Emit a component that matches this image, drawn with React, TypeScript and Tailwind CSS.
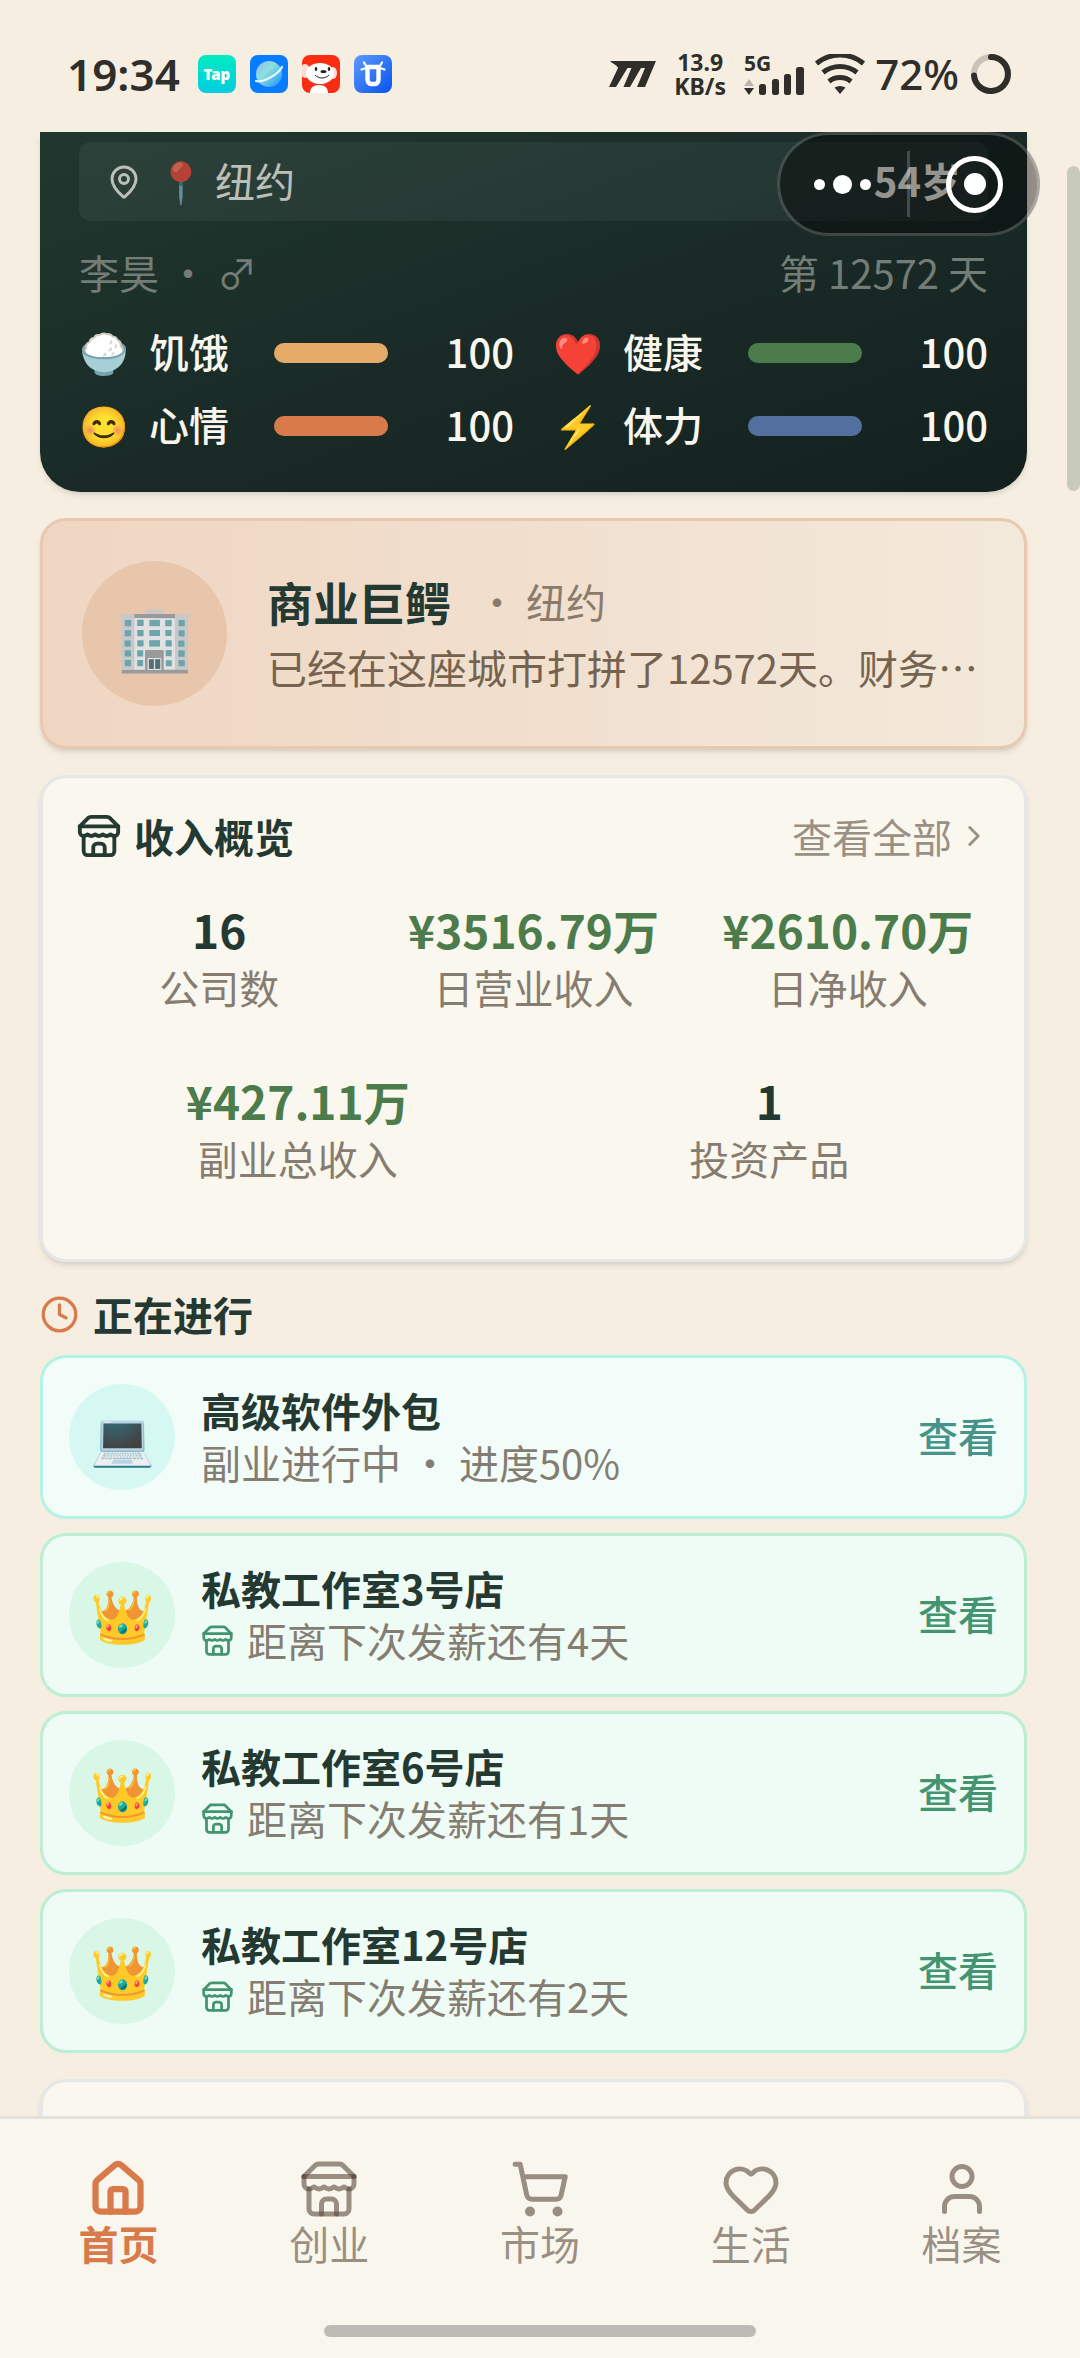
import type { ReactNode } from "react";
import {
  ChevronRight,
  Clock,
  Heart,
  House,
  MapPin,
  ShoppingCart,
  User,
} from "lucide-react";

const STATS = [
  { icon: "🍚", label: "饥饿", value: 100, color: "bg-[#e5ab69]" },
  { icon: "❤️", label: "健康", value: 100, color: "bg-[#4c7c4c]" },
  { icon: "😊", label: "心情", value: 100, color: "bg-[#d97a4a]" },
  { icon: "⚡", label: "体力", value: 100, color: "bg-[#536f9f]" },
];

const SHOPS = [
  { name: "私教工作室3号店", days: 4 },
  { name: "私教工作室6号店", days: 1 },
  { name: "私教工作室12号店", days: 2 },
];

function StoreIcon({ className }: { className?: string }) {
  return (
    <svg
      viewBox="0 0 24 24"
      fill="none"
      stroke="currentColor"
      strokeWidth="2"
      strokeLinecap="round"
      strokeLinejoin="round"
      className={className}
      aria-hidden="true"
    >
      <path d="m2 7 4.41-4.41A2 2 0 0 1 7.83 2h8.34a2 2 0 0 1 1.42.59L22 7" />
      <path d="M4 12v8a2 2 0 0 0 2 2h12a2 2 0 0 0 2-2v-8" />
      <path d="M15 22v-4a2 2 0 0 0-2-2h-2a2 2 0 0 0-2 2v4" />
      <path d="M2 7h20" />
      <path d="M22 7v3a2 2 0 0 1-2 2a2.7 2.7 0 0 1-1.59-.63.7.7 0 0 0-.82 0A2.7 2.7 0 0 1 16 12a2.7 2.7 0 0 1-1.59-.63.7.7 0 0 0-.82 0A2.7 2.7 0 0 1 12 12a2.7 2.7 0 0 1-1.59-.63.7.7 0 0 0-.82 0A2.7 2.7 0 0 1 8 12a2.7 2.7 0 0 1-1.59-.63.7.7 0 0 0-.82 0A2.7 2.7 0 0 1 4 12a2 2 0 0 1-2-2V7" />
    </svg>
  );
}

function StatusBar() {
  return (
    <header className="flex h-[132px] shrink-0 items-center justify-between pt-4 pr-[69px] pl-[67px] font-['Noto_Sans',sans-serif] text-[#302e2a]">
      <div className="flex items-center gap-[18px]">
        <span className="text-[44px] leading-[56px] font-semibold">19:34</span>
        <div className="flex gap-[14px]">
          {/* TapTap */}
          <span className="flex size-[38px] items-center justify-center rounded-[8px] bg-gradient-to-b from-[#04ecc0] to-[#06cbe0] text-[15px] leading-none font-black text-white">
            Tap
          </span>
          {/* Browser */}
          <svg viewBox="0 0 38 38" className="size-[38px] rounded-[8px] bg-[#087cff]">
            <defs>
              <linearGradient id="planet" x1="0" y1="0" x2="1" y2="1">
                <stop offset="0" stopColor="#8fb8ff" />
                <stop offset=".4" stopColor="#8fe0dc" />
                <stop offset="1" stopColor="#1593ff" />
              </linearGradient>
            </defs>
            <circle cx="19" cy="19" r="13" fill="url(#planet)" />
            <path d="M6 26c6 2 22-6 26-14" fill="none" stroke="#e6f8ff" strokeWidth="2.2" strokeLinecap="round" />
          </svg>
          {/* JD */}
          <svg viewBox="0 0 38 38" className="size-[38px] rounded-[8px] bg-[#fa2c12]">
            <path d="M8 38c0-5 3-8 9-8s9 3 9 8z" fill="#fff" />
            <ellipse cx="3" cy="16" rx="5" ry="7" fill="#fbdcd6" />
            <ellipse cx="31" cy="18" rx="4" ry="6" fill="#fbdcd6" />
            <ellipse cx="18" cy="18.5" rx="14" ry="10.5" fill="#fff" />
            <ellipse cx="14" cy="14" rx="1.3" ry="2" fill="#222" />
            <ellipse cx="27" cy="14" rx="1.3" ry="2" fill="#222" />
            <ellipse cx="21.5" cy="16.5" rx="3" ry="1.6" fill="#222" />
            <path d="M13 20c4 4 10 4 14 0" fill="none" stroke="#222" strokeWidth="1" />
          </svg>
          {/* Bull */}
          <svg viewBox="0 0 38 38" className="size-[38px] rounded-[8px]">
            <defs>
              <linearGradient id="bull" x1="0" y1="0" x2="1" y2="1">
                <stop offset="0" stopColor="#5e9bfb" />
                <stop offset="1" stopColor="#0653ee" />
              </linearGradient>
            </defs>
            <rect width="38" height="38" fill="url(#bull)" />
            <path
              d="M13.5 12h11v12c0 3-1.500 5-3.500 5h-4c-2 0-3.500-2-3.500-5z"
              fill="none"
              stroke="#fff"
              strokeWidth="4.4"
              strokeLinejoin="round"
            />
            <path
              d="M12.500 11.500 10 7.500M25.500 11.500 28 7.500M7.500 14.500 12 13M30.500 14.500 26 13"
              stroke="#fff"
              strokeWidth="2.2"
              strokeLinecap="round"
            />
          </svg>
        </div>
      </div>

      <div className="flex items-center">
        <svg viewBox="0 0 47 26" className="h-[26px] w-[47px]" fill="currentColor">
          <path d="M1 0H47L36 26H28L36 7H32L21 26H14.500L22.500 7H18.500L7 26H0L9 7C8 4 4 3 1 0z" />
        </svg>
        <div className="ml-[18px] flex flex-col items-center text-[23px] leading-6 font-bold">
          <span>13.9</span>
          <span>KB/s</span>
        </div>
        <div className="ml-[18px] flex h-[42px] flex-col">
          <span className="text-[21px] leading-5 font-bold">5G</span>
        </div>
        <svg viewBox="0 0 60 42" className="-ml-[27px] h-[42px] w-[60px]" fill="currentColor">
          <path d="m5 26 5 7H0z" opacity=".3" />
          <path d="M0 35h10l-5 7z" />
          <rect x="15" y="31" width="7" height="11" rx="2.5" />
          <rect x="28" y="26" width="7" height="16" rx="2.5" />
          <rect x="40" y="21" width="7" height="21" rx="2.5" />
          <rect x="52" y="14" width="8" height="28" rx="2.5" />
        </svg>
        <svg viewBox="0 0 50 40" className="ml-[11px] h-[40px] w-[50px]" fill="none" stroke="currentColor" strokeWidth="5">
          <path d="M1.500 9.500a37 37 0 0 1 47 0" />
          <path d="M8 18.500a27 27 0 0 1 34 0" />
          <path d="M14 27.500a17.500 17.500 0 0 1 22 0" />
          <path d="M19.500 33.500q5.500-3 11 0L25 40z" fill="currentColor" stroke="none" />
        </svg>
        <span className="ml-[10px] text-[42px] leading-[56px] font-medium">72%</span>
        <svg viewBox="0 0 40 40" className="ml-3 size-10" fill="none" stroke="currentColor" strokeWidth="6">
          <circle cx="20" cy="20" r="17" opacity=".22" />
          <path d="M20 3a17 17 0 1 1-17 18.500" strokeLinecap="round" />
        </svg>
      </div>
    </header>
  );
}

// Mini-program capsule floating over the page
function Capsule() {
  return (
    <div className="absolute top-[132px] right-10 flex h-[104px] w-[263px] items-center rounded-full border-3 border-white/20 bg-black/40">
      <button type="button" aria-label="更多" className="flex w-[127px] items-center justify-end gap-2 pr-9">
        <span className="size-[11px] rounded-full bg-white" />
        <span className="size-[19px] rounded-full bg-white" />
        <span className="size-[11px] rounded-full bg-white" />
      </button>
      <span className="h-[66px] w-[3px] bg-white/20" />
      <button type="button" aria-label="关闭" className="flex flex-1 items-center pl-9">
        <span className="flex size-[57px] items-center justify-center rounded-full border-5 border-white">
          <span className="size-[22px] rounded-full bg-white" />
        </span>
      </button>
    </div>
  );
}

function ProfileCard() {
  return (
    <section className="rounded-b-[40px] bg-gradient-to-br from-[#20382f] via-[#1a2b27] to-[#13211e] px-[39px] pt-[10px] pb-[38px] shadow-md">
      <div className="flex h-[79px] items-center justify-between rounded-[12px] bg-white/5 px-[27px]">
        <div className="flex items-center gap-[14px] text-[#f9f6ed] opacity-70">
          <MapPin className="size-9" />
          <span className="pb-1">📍 纽约</span>
        </div>
        <span className="pb-1 font-bold text-[#f9f6ed]">54岁</span>
      </div>

      <div className="mt-[25px] flex justify-between pb-1 text-[#737d75]">
        <span>李昊 • ♂</span>
        <span>第 12572 天</span>
      </div>

      <div className="mt-[23px] grid grid-cols-2 gap-x-[39px] gap-y-[17px] font-medium text-[#f9f6ed]">
        {STATS.map((stat) => (
          <div key={stat.label} className="flex items-center gap-[22px]">
            <span className="w-12 pb-1">{stat.icon}</span>
            <span className="w-[103px] pb-1">{stat.label}</span>
            <div className="h-5 flex-1 rounded-full bg-white/10">
              <div
                className={`h-full rounded-full ${stat.color}`}
                style={{ width: `${stat.value}%` }}
              />
            </div>
            <span className="w-[104px] pb-1 text-right">{stat.value}</span>
          </div>
        ))}
      </div>
    </section>
  );
}

function CareerCard() {
  return (
    <section className="flex items-center gap-10 rounded-[26px] border-3 border-[#e8c8b0] bg-gradient-to-r from-[#efd6c2] to-[#f3e9da] px-[39px] py-10 shadow-md">
      <div className="flex size-[145px] shrink-0 items-center justify-center rounded-full bg-[#e8c6ab] pb-1 text-[64px]">
        🏢
      </div>
      <div className="min-w-0 flex-1">
        <div className="flex items-center gap-[26px] leading-[66px]">
          <h2 className="text-[46px] font-bold text-[#233932]">商业巨鳄</h2>
          <span className="text-[#8b7b6b]">• 纽约</span>
        </div>
        <p className="truncate leading-[66px] text-[#75634f]">
          已经在这座城市打拼了12572天。财务自由就在眼前
        </p>
      </div>
    </section>
  );
}

function Figure({ value, label, green }: { value: string; label: string; green?: boolean }) {
  return (
    <div className="flex flex-col-reverse items-center">
      <dt className="leading-[56px] text-[#877c70]">{label}</dt>
      <dd
        className={`text-[46px] leading-[60px] font-bold ${green ? "text-[#4c7c4c]" : "text-[#233932]"}`}
      >
        {value}
      </dd>
    </div>
  );
}

function IncomeCard() {
  return (
    <section className="rounded-[26px] border-3 border-[#e6e7e8] bg-[#f9f7ee] px-[33px] pt-[34px] pb-[73px] shadow-md">
      <div className="flex h-[52px] items-center justify-between pb-1">
        <h2 className="flex items-center gap-3 font-bold text-[#233932]">
          <StoreIcon className="size-[46px]" />
          收入概览
        </h2>
        <a href="#income" className="flex items-center gap-[5px] text-[#9a9184]">
          查看全部
          <ChevronRight className="size-[34px]" />
        </a>
      </div>
      <dl className="mt-[35px] grid grid-cols-3 gap-7">
        <Figure value="16" label="公司数" />
        <Figure value="¥3516.79万" label="日营业收入" green />
        <Figure value="¥2610.70万" label="日净收入" green />
      </dl>
      <dl className="mt-[55px] grid grid-cols-2 gap-7">
        <Figure value="¥427.11万" label="副业总收入" green />
        <Figure value="1" label="投资产品" />
      </dl>
    </section>
  );
}

interface TaskRowProps {
  icon: string;
  title: string;
  tone: "teal" | "green";
  children: ReactNode;
}

function TaskRow({ icon, title, tone, children }: TaskRowProps) {
  const teal = tone === "teal";
  return (
    <li
      className={`flex items-center gap-[26px] rounded-[26px] border-3 p-[26px] ${
        teal ? "border-[#b5f1e4] bg-[#f2fdfa]" : "border-[#bbeed3] bg-[#eefcf5]"
      }`}
    >
      <div
        className={`flex size-[106px] shrink-0 items-center justify-center rounded-full pb-1 text-[52px] ${
          teal ? "bg-[#d5f9f2]" : "bg-[#d9f7e6]"
        }`}
      >
        {icon}
      </div>
      <div className="min-w-0 flex-1 pb-0.5 leading-[52px]">
        <h3 className="font-bold text-[#233932]">{title}</h3>
        <p className="flex items-center gap-[13px] text-[#857d72]">{children}</p>
      </div>
      <button
        type="button"
        className={`pb-1 font-medium ${teal ? "text-[#459389]" : "text-[#439470]"}`}
      >
        查看
      </button>
    </li>
  );
}

function Ongoing() {
  return (
    <section>
      <h2 className="flex items-center gap-[14px] pb-1 font-bold text-[#233932]">
        <Clock className="size-[39px] text-[#d97a4a]" />
        正在进行
      </h2>
      <ul className="mt-[11px] flex flex-col gap-[14px]">
        <TaskRow icon="💻" title="高级软件外包" tone="teal">
          副业进行中 • 进度50%
        </TaskRow>
        {SHOPS.map((shop) => (
          <TaskRow key={shop.name} icon="👑" title={shop.name} tone="green">
            <StoreIcon className="size-[33px] text-[#439470]" />
            距离下次发薪还有{shop.days}天
          </TaskRow>
        ))}
      </ul>
    </section>
  );
}

const TABS = [
  { label: "首页", icon: <House className="size-[60px]" strokeWidth={2.5} /> },
  { label: "创业", icon: <StoreIcon className="size-[60px]" /> },
  { label: "市场", icon: <ShoppingCart className="size-[60px]" /> },
  { label: "生活", icon: <Heart className="size-[60px]" /> },
  { label: "档案", icon: <User className="size-[60px]" /> },
];

function TabBar() {
  return (
    <footer className="shrink-0 border-t-3 border-[#e4e3da] bg-[#f9f6ed] pb-[21px]">
      <nav className="grid grid-cols-5 px-[13px] pt-10 leading-[48px]">
        {TABS.map((tab, i) => (
          <a
            key={tab.label}
            href={`#tab-${i}`}
            className={`flex flex-col items-center ${
              i === 0 ? "font-bold text-[#d97a4a]" : "text-[#5a4a3a]/60"
            }`}
          >
            {tab.icon}
            {tab.label}
          </a>
        ))}
      </nav>
      <div className="mx-auto mt-[58px] h-3 w-2/5 rounded-full bg-[#bbbab5]" />
    </footer>
  );
}

export default function App() {
  return (
    <div
      lang="zh-CN"
      className="relative flex h-screen flex-col overflow-hidden bg-[#f5eee1] font-['Noto_Sans_CJK_SC',sans-serif] text-[40px] leading-[52px]"
    >
      <StatusBar />
      <main className="flex min-h-0 flex-1 flex-col gap-[26px] overflow-hidden pr-[53px] pl-10 *:shrink-0">
        <ProfileCard />
        <CareerCard />
        <IncomeCard />
        <Ongoing />
        <section className="h-60 rounded-[26px] border-3 border-[#e6e7e8] bg-[#f9f7ee] shadow-md" />
      </main>
      <TabBar />

      {/* Scroll thumb */}
      <div className="absolute top-[166px] right-0 h-[325px] w-[13px] rounded-full bg-[#c8cabc]" />
      <Capsule />
    </div>
  );
}
